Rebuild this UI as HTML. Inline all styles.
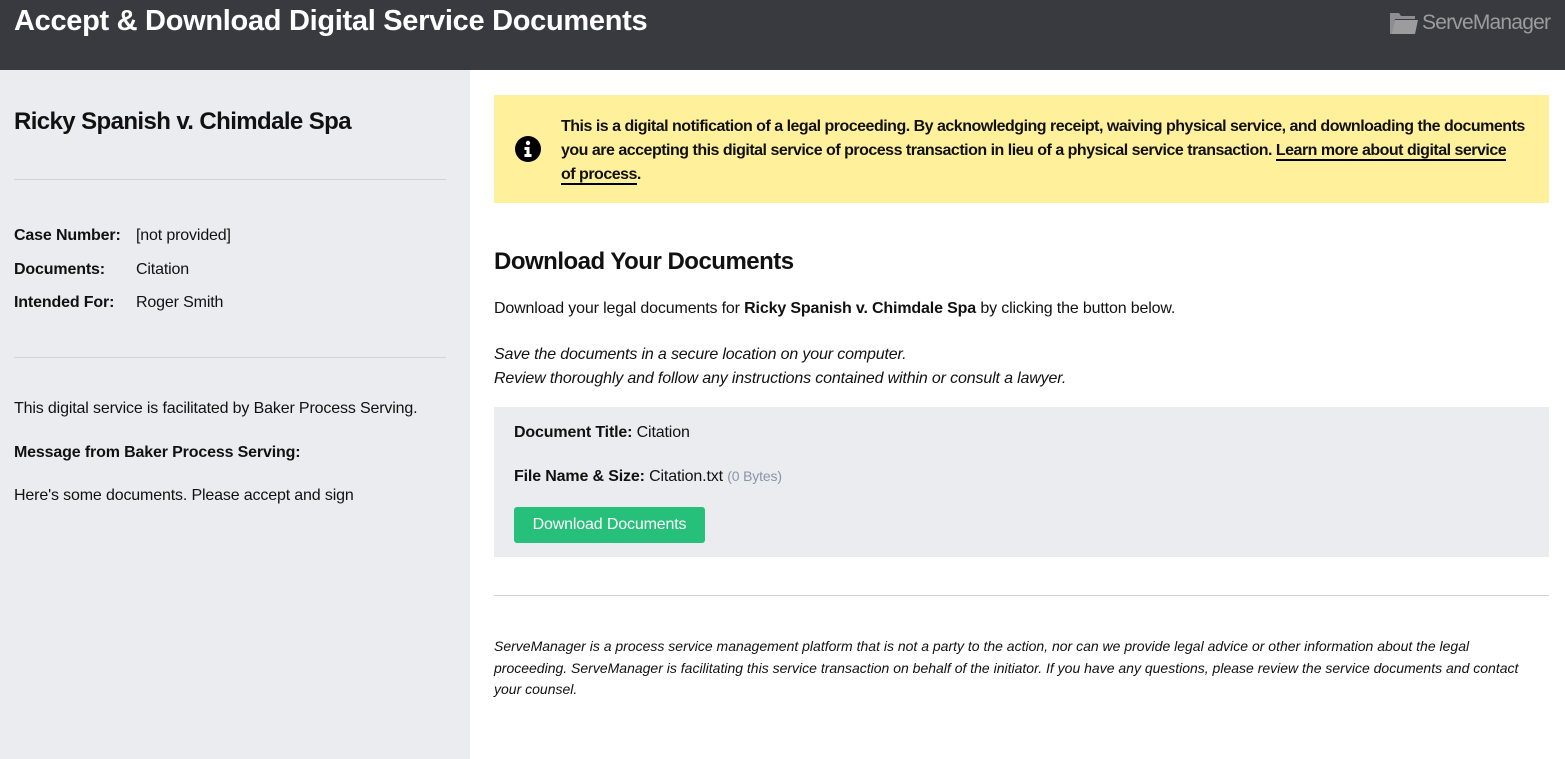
<!DOCTYPE html>
<html><head><meta charset="utf-8"><style>
*{margin:0;padding:0;box-sizing:border-box}
body{width:1565px;height:759px;overflow:hidden;font-family:"Liberation Sans",sans-serif;color:#111;font-size:16px;background:#fff;position:relative;letter-spacing:-0.15px}
.hdr{position:absolute;left:0;top:0;width:1565px;height:70px;background:#393a3f}
.hdr h1{position:absolute;left:14px;top:5px;font-size:29px;color:#fff;font-weight:bold;letter-spacing:-0.3px}
.logo{position:absolute;left:1389px;top:10px;color:#9c9c9f;font-size:21px;display:flex;align-items:center;gap:3px;letter-spacing:-0.8px}
.side{position:absolute;left:0;top:70px;width:470px;height:689px;background:#ebecef}
.abs{position:absolute}
.hr{position:absolute;height:1px;background:#d3d3d6}
b{font-weight:bold}
</style></head><body>
<div class="hdr"><h1>Accept &amp; Download Digital Service Documents</h1>
<div class="logo"><svg width="30" height="26" viewBox="0 0 30 26"><path d="M1 3h9l2 3h14v3H6L4 24H1z" fill="#8e8e91"/><path d="M6 10h23l-3 14H3z" fill="#9c9c9f"/></svg>ServeManager</div></div>
<div class="side">
<div class="abs" style="left:14px;top:38px;font-size:24px;font-weight:bold;letter-spacing:-0.6px">Ricky Spanish v. Chimdale Spa</div>
<div class="hr" style="left:14px;top:109px;width:432px"></div>
<div class="abs" style="left:14px;top:149px;line-height:34px;font-size:16px">
<div><b style="display:inline-block;width:122px">Case Number:</b>[not provided]</div>
<div><b style="display:inline-block;width:122px">Documents:</b>Citation</div>
<div style="margin-top:-1px"><b style="display:inline-block;width:122px">Intended For:</b>Roger Smith</div></div>
<div class="hr" style="left:14px;top:287px;width:432px"></div>
<div class="abs" style="left:14px;top:330px">This digital service is facilitated by Baker Process Serving.</div>
<div class="abs" style="left:14px;top:374px;font-weight:bold">Message from Baker Process Serving:</div>
<div class="abs" style="left:14px;top:417px">Here's some documents. Please accept and sign</div>
</div>
<div class="abs" style="left:494px;top:95px;width:1055px;height:108px;background:#fff09b"></div>
<svg class="abs" style="left:514px;top:135px" width="28" height="28" viewBox="0 0 28 28"><circle cx="14" cy="14" r="13" fill="#000"/><circle cx="14" cy="8" r="2.2" fill="#fff"/><path d="M10.5 12h5v7h2v3h-7v-3h2v-4h-2z" fill="#fff"/></svg>
<div class="abs" style="left:561px;top:115px;width:985px;white-space:nowrap;font-weight:bold;line-height:24px;font-size:16px;letter-spacing:-0.5px">This is a digital notification of a legal proceeding. By acknowledging receipt, waiving physical service, and downloading the documents<br>you are accepting this digital service of process transaction in lieu of a physical service transaction. <span style="border-bottom:2px solid #000">Learn more about digital service</span><br><span style="border-bottom:2px solid #000">of process</span>.</div>
<div class="abs" style="left:494px;top:248px;font-size:24px;font-weight:bold;letter-spacing:-0.5px">Download Your Documents</div>
<div class="abs" style="left:494px;top:300px">Download your legal documents for <b>Ricky Spanish v. Chimdale Spa</b> by clicking the button below.</div>
<div class="abs" style="left:494px;top:343px;font-style:italic;line-height:24px">Save the documents in a secure location on your computer.<br>Review thoroughly and follow any instructions contained within or consult a lawyer.</div>
<div class="abs" style="left:494px;top:407px;width:1055px;height:150px;background:#ebecef"></div>
<div class="abs" style="left:514px;top:424px"><b>Document Title:</b> Citation</div>
<div class="abs" style="left:514px;top:468px"><b>File Name &amp; Size:</b> Citation.txt <span style="color:#8a93a8;font-size:14px">(0 Bytes)</span></div>
<div class="abs" style="left:514px;top:507px;width:191px;height:36px;background:#27c07a;border-radius:3px;color:#fff;text-align:center;line-height:36px">Download Documents</div>
<div class="hr" style="left:494px;top:595px;width:1055px"></div>
<div class="abs" style="left:494px;top:636px;width:1040px;font-size:14px;font-style:italic;line-height:21.5px;letter-spacing:0">ServeManager is a process service management platform that is not a party to the action, nor can we provide legal advice or other information about the legal<br>proceeding. ServeManager is facilitating this service transaction on behalf of the initiator. If you have any questions, please review the service documents and contact<br>your counsel.</div>
</body></html>
